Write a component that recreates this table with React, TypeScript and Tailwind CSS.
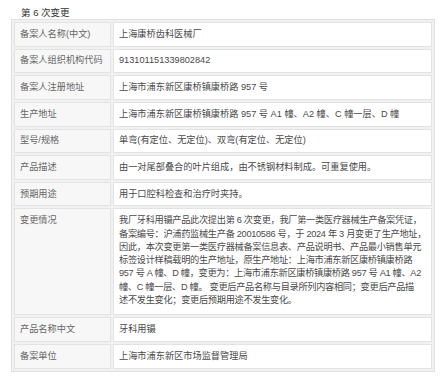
const rows: { label: string; value: React.ReactNode }[] = [
  { label: '备案人名称(中文)', value: '上海康桥齿科医械厂' },
  { label: '备案人组织机构代码', value: '913101151339802842' },
  { label: '备案人注册地址', value: '上海市浦东新区康桥镇康桥路 957 号' },
  { label: '生产地址', value: '上海市浦东新区康桥镇康桥路 957 号 A1 幢、A2 幢、C 幢一层、D 幢' },
  { label: '型号/规格', value: '单弯(有定位、无定位)、双弯(有定位、无定位)' },
  { label: '产品描述', value: '由一对尾部叠合的叶片组成，由不锈钢材料制成。可重复使用。' },
  { label: '预期用途', value: '用于口腔科检查和治疗时夹持。' },
  {
    label: '变更情况',
    value: (
      <div className="whitespace-nowrap tracking-[-0.3px]">
        我厂牙科用镊产品此次提出第 6 次变更，我厂第一类医疗器械生产备案凭证，
        <br />
        备案编号：沪浦药监械生产备 20010586 号，于 2024 年 3 月变更了生产地址，
        <br />
        因此，本次变更第一类医疗器械备案信息表、产品说明书、产品最小销售单元
        <br />
        标签设计样稿载明的生产地址，原生产地址：上海市浦东新区康桥镇康桥路
        <br />
        957 号 A 幢、D 幢，变更为：上海市浦东新区康桥镇康桥路 957 号 A1 幢、A2
        <br />
        幢、C 幢一层、D 幢。 变更后产品名称与目录所列内容相同；变更后产品描
        <br />
        述不发生变化；变更后预期用途不发生变化。
      </div>
    ),
  },
  { label: '产品名称中文', value: '牙科用镊' },
  { label: '备案单位', value: '上海市浦东新区市场监督管理局' },
];

export default function App() {
  return (
    <div
      className="w-[440px] h-[378px] bg-white overflow-hidden"
      style={{ fontFamily: '"Liberation Sans", "Noto Sans CJK SC", sans-serif' }}
    >
      <div className="pl-[21px] pt-[6.5px] text-[9.5px] leading-[12.5px] text-[#333]">第 6 次变更</div>
      <table className="ml-[11px] w-[424px] table-fixed border-separate border-spacing-[2px] border border-[#e0e0e0] bg-[#f1f1f1] text-[9.2px] leading-[13.33px]">
        <colgroup>
          <col className="w-[97px]" />
          <col />
        </colgroup>
        <tbody>
          {rows.map((row, i) => (
            <tr key={row.label}>
              <td
                className={`align-top border border-[#e3e3e3] bg-[#f7f7f7] px-[5px] text-[#666] whitespace-nowrap ${
                  i === 7 ? 'pt-[4.7px] pb-[7px]' : 'py-[4.67px]'
                }`}
              >
                {row.label}
              </td>
              <td
                className={`align-top border border-[#e3e3e3] bg-white px-[5px] text-[#4a4a4a] whitespace-nowrap ${
                  i === 7 ? 'pt-[4.7px] pb-[7px]' : 'py-[4.67px]'
                }`}
              >
                {row.value}
              </td>
            </tr>
          ))}
        </tbody>
      </table>
    </div>
  );
}
